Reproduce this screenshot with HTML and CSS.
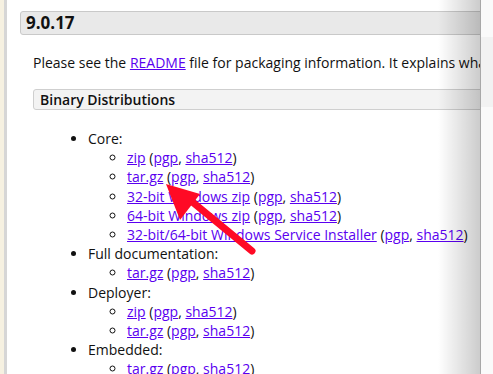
FILE: index.html
```html
<!DOCTYPE html>
<html lang="en">
  <head>
    <meta charset="UTF-8" />
    <meta name="viewport" content="width=device-width, initial-scale=1.0" />
    <title>Tomcat 9 Downloads</title>
    <link rel="stylesheet" href="styles.css">
  </head>
  <body>
    <div class="page">
      <div class="sidebar"></div>
      <div class="content">
        <h3 class="version">9.0.17</h3>

        <div class="section">
          <p class="intro">Please see the <a href="#">README</a> file for packaging information. It explains what every distribution contains.</p>

          <h4 class="subhead">Binary Distributions</h4>

          <ul class="dists">
            <li>Core:
              <ul>
                <li><a href="#">zip</a> (<a href="#">pgp</a>, <a href="#">sha512</a>)</li>
                <li><a href="#">tar.gz</a> (<a href="#">pgp</a>, <a href="#">sha512</a>)</li>
                <li><a href="#">32-bit Windows zip</a> (<a href="#">pgp</a>, <a href="#">sha512</a>)</li>
                <li><a href="#">64-bit Windows zip</a> (<a href="#">pgp</a>, <a href="#">sha512</a>)</li>
                <li><a href="#">32-bit/64-bit Windows Service Installer</a> (<a href="#">pgp</a>, <a href="#">sha512</a>)</li>
              </ul>
            </li>
            <li>Full documentation:
              <ul>
                <li><a href="#">tar.gz</a> (<a href="#">pgp</a>, <a href="#">sha512</a>)</li>
              </ul>
            </li>
            <li>Deployer:
              <ul>
                <li><a href="#">zip</a> (<a href="#">pgp</a>, <a href="#">sha512</a>)</li>
                <li><a href="#">tar.gz</a> (<a href="#">pgp</a>, <a href="#">sha512</a>)</li>
              </ul>
            </li>
            <li>Embedded:
              <ul>
                <li><a href="#">tar.gz</a> (<a href="#">pgp</a>, <a href="#">sha512</a>)</li>
              </ul>
            </li>
          </ul>
        </div>

        <!-- right edge shadow of the page panel -->
        <div class="edge"></div>
      </div>
      <div class="gutter">
        <div class="gutter-band"></div>
      </div>
    </div>

    <!-- annotation arrow pointing at tar.gz -->
    <svg class="arrow" width="493" height="374" viewBox="0 0 493 374">
      <line x1="252" y1="251" x2="190" y2="200" stroke="#ff0a25" stroke-width="7" stroke-linecap="round" />
      <polygon points="166,184 200,194 180,220" fill="#ff0a25" />
    </svg>
  </body>
</html>
```

FILE: styles.css
```css
body {
  margin: 0;
  font-family: "Open Sans", "Liberation Sans", sans-serif;
  font-size: 14px;
  color: #111;
  background: #fff;
  overflow: hidden;
}
.page {
  display: flex;
  height: 374px;
}
.sidebar {
  width: 4px;
  flex: none;
  background: #f6f1e1;
  border-right: 3px solid #d6d6d6;
}
.content {
  position: relative;
  width: 474px;
  flex: none;
  overflow: hidden;
  white-space: nowrap;
  padding-top: 11px;
}
.version {
  margin: 0 0 0 13px;
  width: 520px;
  height: 22px;
  padding-left: 5px;
  font-size: 17px;
  line-height: 22px;
  font-weight: bold;
  background: #e9e9e9;
  border: 1px solid #c9c9c9;
  border-radius: 3px;
}
.section {
  padding-left: 26px;
}
.intro {
  margin: 18px 0 0;
  line-height: 19px;
}
a {
  color: #5a00f0;
}
.subhead {
  margin: 17px 0 0;
  width: 520px;
  height: 19px;
  padding-left: 6px;
  font-size: 14px;
  line-height: 19px;
  font-weight: 600;
  background: #f3f3f3;
  border: 1px solid #cfcfcf;
  border-radius: 3px;
}
.dists {
  margin: 19px 0 0;
  padding-left: 55px;
  line-height: 19.2px;
}
.dists ul {
  margin: 0;
  padding-left: 39px;
}
.edge {
  position: absolute;
  top: 0;
  right: 0;
  width: 42px;
  height: 100%;
  background: linear-gradient(to right, rgba(0, 0, 0, 0), rgba(0, 0, 0, 0.2));
  border-right: 1px solid #a8a8a8;
}
.gutter {
  flex: 1;
  background: #fafafa;
  padding-top: 37px;
}
.gutter-band {
  height: 70px;
  background: #f2f2f2;
}
.arrow {
  position: absolute;
  top: 0;
  left: 0;
}
```
